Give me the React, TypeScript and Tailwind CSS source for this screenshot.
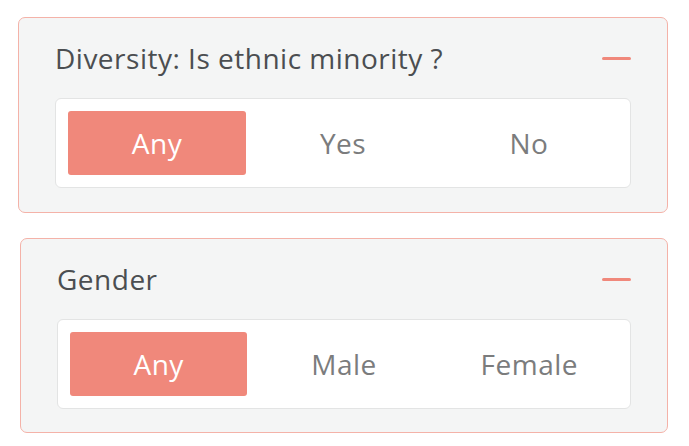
import React from "react";

function Segmented({ options }: { options: string[] }) {
  return (
    <div className="grid grid-cols-3 gap-[8px] rounded-[6px] border border-[#e3e4e4] bg-white p-[12px]">
      {options.map((o, i) => (
        <div
          key={o}
          className={
            i === 0
              ? "flex h-[64px] items-center justify-center rounded-[3px] bg-[#f0887b] text-[28px] tracking-[0.5px] text-white"
              : "flex h-[64px] items-center justify-center text-[28px] tracking-[0.5px] text-[#7b7c7d]"
          }
        >
          {o}
        </div>
      ))}
    </div>
  );
}

function Card({ title, options, className }: { title: string; options: string[]; className: string }) {
  return (
    <div className={"rounded-[7px] border border-[#f4b2a8] bg-[#f4f5f5] px-[36px] pt-[20px] " + className}>
      <div className="mb-[20px] flex h-[40px] items-center justify-between">
        <div className="text-[28px] leading-[40px] tracking-[0.5px] text-[#4b4e51]">{title}</div>
        <div className="h-[3px] w-[29px] rounded-full bg-[#f0887b]" />
      </div>
      <Segmented options={options} />
    </div>
  );
}

export default function App() {
  return (
    <div
      className="flex h-[446px] w-[689px] flex-col bg-white pt-[17px]"
      style={{ fontFamily: "'Open Sans', Lato, sans-serif" }}
    >
      <Card title="Diversity: Is ethnic minority ?" options={["Any", "Yes", "No"]} className="ml-[18px] w-[650px] pb-[24px]" />
      <Card title="Gender" options={["Any", "Male", "Female"]} className="ml-[20px] mt-[25px] w-[648px] pb-[23px]" />
    </div>
  );
}
